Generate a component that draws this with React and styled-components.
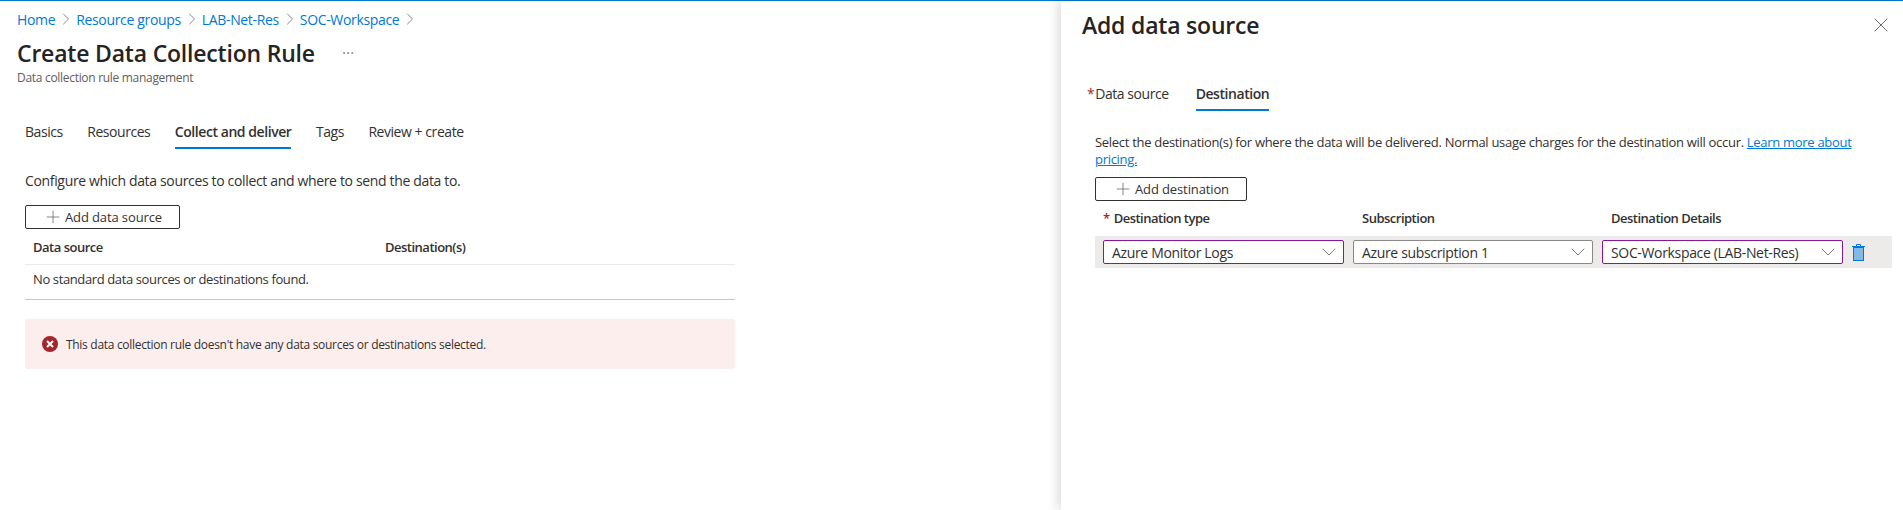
import React from "react";
import styled, { createGlobalStyle } from "styled-components";
import { ChevronDown, ChevronRight, MoreHorizontal, Plus, X } from "lucide-react";

const GlobalStyle = createGlobalStyle`
  html, body { margin: 0; padding: 0; background: #fff; }
  body {
    font-family: "Open Sans", "Noto Sans", sans-serif;
    font-size: 13px;
    color: #323130;
    letter-spacing: -0.25px;
    overflow: hidden;
  }
`;

const Shell = styled.div`
  display: flex;
  height: 509px;
  border-top: 1px solid #0078d4;
`;

const Blade = styled.main`
  width: 1061px;
  flex: none;
  padding: 9px 0 0 17px;
  box-sizing: border-box;
`;

const Crumbs = styled.nav`
  display: flex;
  align-items: center;
  height: 18px;
  font-size: 14px;
  letter-spacing: -0.34px;
  color: #0078d4;
`;

const Crumb = styled.span`
  display: flex;
  align-items: center;
  gap: 1px;
  svg { color: #605e5c; }
`;

const TitleRow = styled.div`
  display: flex;
  align-items: center;
  gap: 26px;
  margin-top: 8px;
  height: 34px;
`;

const Title = styled.h1`
  margin: 0;
  font-size: 23px;
  font-weight: 600;
  color: #252423;
  letter-spacing: -0.2px;
`;

const Subtitle = styled.div`
  font-size: 12px;
  line-height: 14px;
  letter-spacing: -0.3px;
  color: #605e5c;
  margin-top: 1px;
`;

const Content = styled.div`
  padding-left: 8px;
  width: 710px;
`;

const Tabs = styled.div`
  display: flex;
  gap: ${(p) => p.$gap}px;
  margin-top: ${(p) => p.$top}px;
  padding-left: ${(p) => p.$inset || 0}px;
`;

const Tab = styled.div`
  height: 29px;
  line-height: 24px;
  box-sizing: border-box;
  font-size: 14px;
  font-weight: ${(p) => (p.$active ? 600 : 400)};
  letter-spacing: ${(p) => (p.$active ? -0.44 : -0.45)}px;
  color: #323130;
  border-bottom: 2px solid ${(p) => (p.$active ? "#0078d4" : "transparent")};
`;

const Intro = styled.p`
  margin: 23px 0 0;
  line-height: 18px;
  font-size: 14px;
  letter-spacing: -0.34px;
`;

const OutlineButton = styled.button`
  display: flex;
  align-items: center;
  justify-content: center;
  gap: 2px;
  width: ${(p) => p.$width}px;
  height: 24px;
  margin-top: ${(p) => p.$top}px;
  padding: 0;
  background: #fff;
  border: 1px solid #323130;
  border-radius: 2px;
  font: inherit;
  letter-spacing: -0.12px;
  color: #323130;
  svg { color: #605e5c; }
`;

const TableHead = styled.div`
  display: grid;
  grid-template-columns: 352px 1fr;
  padding: 0 8px;
  height: 35px;
  align-items: center;
  font-weight: 600;
  letter-spacing: -0.5px;
  border-bottom: 1px solid #edebe9;
`;

const EmptyRow = styled.div`
  padding: 0 8px;
  height: 34px;
  line-height: 28px;
  letter-spacing: -0.38px;
  border-bottom: 1px solid #c8c6c4;
`;

const Alert = styled.div`
  display: flex;
  align-items: center;
  gap: 8px;
  height: 50px;
  margin-top: 19px;
  padding-left: 17px;
  background: #fdeeee;
  border-radius: 2px;
  font-size: 12px;
  letter-spacing: -0.3px;
`;

const Panel = styled.aside`
  flex: 1;
  box-shadow: -4px 0 10px rgba(0, 0, 0, 0.13);
  padding: 0 11px 0 21px;
  box-sizing: border-box;
`;

const PanelHead = styled.header`
  display: flex;
  justify-content: space-between;
  align-items: flex-start;
  padding-top: 9px;
`;

const PanelTitle = styled.h2`
  margin: 0;
  font-size: 23px;
  line-height: 31px;
  font-weight: 600;
  color: #252423;
  letter-spacing: -0.2px;
`;

const CloseButton = styled.span`
  display: flex;
  margin: 3px -1px 0 0;
  color: #605e5c;
`;

const Star = styled.span`
  color: #a4262c;
  margin-right: ${(p) => p.$gap}px;
`;

const PanelBody = styled.div`
  padding-left: 13px;
`;

const Description = styled.p`
  margin: 23px 0 0;
  line-height: 17px;
  letter-spacing: -0.3px;
  width: 770px;
`;

const TextLink = styled.a`
  color: #0078d4;
  text-decoration: underline;
`;

const DestGrid = styled.div`
  display: grid;
  grid-template-columns: 241px 240px 241px;
  column-gap: 9px;
  padding: 0 8px;
`;

const HeadCell = styled.div`
  height: 35px;
  line-height: 35px;
  font-weight: 600;
  letter-spacing: -0.5px;
  padding-left: ${(p) => p.$inset || 0}px;
`;

const DestRow = styled.div`
  display: grid;
  grid-template-columns: 241px 240px 241px 14px;
  column-gap: 9px;
  align-items: center;
  height: 32px;
  padding: 0 8px;
  background: #edebe9;
`;

const Select = styled.div`
  display: flex;
  align-items: center;
  justify-content: space-between;
  height: 24px;
  box-sizing: border-box;
  padding: 0 2px 0 8px;
  background: #fff;
  border: 1px solid ${(p) => (p.$dirty ? "#881798" : "#8a8886")};
  border-radius: 2px;
  font-size: 14px;
  letter-spacing: -0.34px;
  svg { color: #605e5c; }
`;

const TrashIcon = () => (
  <svg width="13" height="17" viewBox="0 0 13 17">
    <path d="M4.5 2V.5h4V2" fill="none" stroke="#0078d4" />
    <path d="M0 2.5h13" stroke="#0078d4" />
    <rect x="1.5" y="3.5" width="10" height="13" fill="#83b9e4" stroke="#0078d4" />
  </svg>
);

const ErrorIcon = () => (
  <svg width="16" height="16" viewBox="0 0 16 16">
    <circle cx="8" cy="8" r="8" fill="#a4262c" />
    <path d="M5 5l6 6M11 5l-6 6" stroke="#fff" strokeWidth="2" />
  </svg>
);

const crumbs = ["Home", "Resource groups", "LAB-Net-Res", "SOC-Workspace"];
const bladeTabs = ["Basics", "Resources", "Collect and deliver", "Tags", "Review + create"];
const selects = [
  { label: "Azure Monitor Logs", dirty: true },
  { label: "Azure subscription 1", dirty: false },
  { label: "SOC-Workspace (LAB-Net-Res)", dirty: true },
];

export default function App() {
  return (
    <>
      <GlobalStyle />
      <Shell>
        <Blade>
          <Crumbs>
            {crumbs.map((c) => (
              <Crumb key={c}>
                {c}
                <ChevronRight size={20} strokeWidth={0.9} />
              </Crumb>
            ))}
          </Crumbs>
          <TitleRow>
            <Title>Create Data Collection Rule</Title>
            <MoreHorizontal size={14} strokeWidth={1} color="#605e5c" />
          </TitleRow>
          <Subtitle>Data collection rule management</Subtitle>
          <Content>
            <Tabs $top={35} $gap={24.5}>
              {bladeTabs.map((t) => (
                <Tab key={t} $active={t === "Collect and deliver"}>{t}</Tab>
              ))}
            </Tabs>
            <Intro>Configure which data sources to collect and where to send the data to.</Intro>
            <OutlineButton $width={155} $top={15}>
              <Plus size={20} strokeWidth={0.9} />
              Add data source
            </OutlineButton>
            <TableHead>
              <span>Data source</span>
              <span>Destination(s)</span>
            </TableHead>
            <EmptyRow>No standard data sources or destinations found.</EmptyRow>
            <Alert>
              <ErrorIcon />
              This data collection rule doesn't have any data sources or destinations selected.
            </Alert>
          </Content>
        </Blade>
        <Panel>
          <PanelHead>
            <PanelTitle>Add data source</PanelTitle>
            <CloseButton>
              <X size={24} strokeWidth={0.9} />
            </CloseButton>
          </PanelHead>
          <Tabs $top={41} $gap={27} $inset={5}>
            <Tab>
              <Star $gap={1}>*</Star>Data source
            </Tab>
            <Tab $active>Destination</Tab>
          </Tabs>
          <PanelBody>
            <Description>
              Select the destination(s) for where the data will be delivered. Normal usage charges for the destination will occur.{" "}
              <TextLink>Learn more about pricing.</TextLink>
            </Description>
            <OutlineButton $width={152} $top={9}>
              <Plus size={20} strokeWidth={0.9} />
              Add destination
            </OutlineButton>
            <DestGrid>
              <HeadCell><Star $gap={4}>*</Star>Destination type</HeadCell>
              <HeadCell $inset={9}>Subscription</HeadCell>
              <HeadCell $inset={9}>Destination Details</HeadCell>
            </DestGrid>
            <DestRow>
              {selects.map((s) => (
                <Select key={s.label} $dirty={s.dirty}>
                  {s.label}
                  <ChevronDown size={24} strokeWidth={0.8} />
                </Select>
              ))}
              <TrashIcon />
            </DestRow>
          </PanelBody>
        </Panel>
      </Shell>
    </>
  );
}
